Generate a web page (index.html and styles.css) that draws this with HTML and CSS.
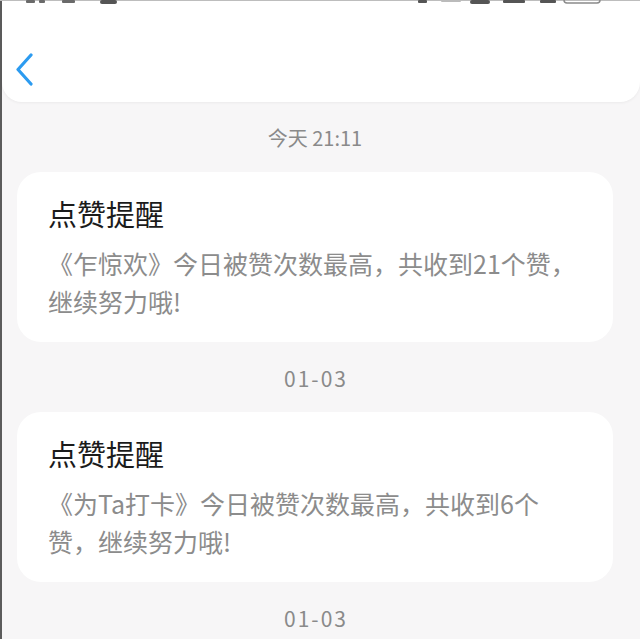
FILE: index.html
```html
<!DOCTYPE html>
<html lang="zh-CN">
<head>
<meta charset="utf-8">
<title>点赞提醒</title>
<link rel="stylesheet" href="styles.css">
</head>
<body>
<div class="screen">
  <header class="header">
    <svg class="statusbar" width="640" height="5" viewBox="0 0 640 5">
      <rect x="0" y="0" width="640" height="1" fill="#bdbdbd"/>
      <rect x="26" y="0" width="9" height="3" rx="1" fill="#6a6a6a"/>
      <rect x="39" y="0" width="6" height="3" rx="1" fill="#6a6a6a"/>
      <rect x="62" y="0" width="13" height="3" rx="1" fill="#6a6a6a"/>
      <rect x="100" y="0" width="17" height="4" rx="2" fill="#555"/>
      <rect x="418" y="0" width="9" height="3" rx="1" fill="#555"/>
      <rect x="441" y="0" width="20" height="2" rx="1" fill="#bbb"/>
      <rect x="470" y="0" width="20" height="4" rx="2" fill="#555"/>
      <rect x="503" y="0" width="22" height="3" rx="1" fill="#555"/>
      <rect x="540" y="0" width="16" height="3" rx="1" fill="#555"/>
      <rect x="564" y="-4" width="36" height="7" rx="3" fill="none" stroke="#8a8a8a" stroke-width="1.5"/>
    </svg>
    <div class="nav">
      <svg class="back" width="20" height="34" viewBox="0 0 20 34">
        <polyline points="15,3 2,17.5 15,32" fill="none" stroke="#2c9bf0" stroke-width="3.2" stroke-linecap="round" stroke-linejoin="round"/>
      </svg>
    </div>
  </header>

  <main class="list">
    <div class="date">今天 21:11</div>
    <section class="card">
      <h2 class="card-title">点赞提醒</h2>
      <p class="card-body">《乍惊欢》今日被赞次数最高，共收到21个赞，继续努力哦!</p>
    </section>

    <div class="date date-num">01-03</div>
    <section class="card">
      <h2 class="card-title">点赞提醒</h2>
      <p class="card-body">《为Ta打卡》今日被赞次数最高，共收到6个赞，继续努力哦!</p>
    </section>

    <div class="date date-num">01-03</div>
  </main>
</div>
</body>
</html>
```

FILE: styles.css
```css
html, body {
  margin: 0;
  padding: 0;
  background: #f7f6f7;
}

body {
  font-family: "Noto Sans CJK SC", "Noto Sans", sans-serif;
  width: 640px;
  height: 639px;
  overflow: hidden;
}

.screen {
  height: 639px;
  border-left: 2px solid #5c5c5c;
  box-sizing: border-box;
  background: #f7f6f7;
}

.header {
  background: #ffffff;
  height: 102px;
  border-radius: 0 0 20px 20px;
  box-shadow: 0 1px 3px rgba(0, 0, 0, 0.05);
  display: flex;
  flex-direction: column;
}

.statusbar {
  display: block;
  margin-left: -2px;
  flex: none;
}

.nav {
  flex: 1;
  display: flex;
  align-items: flex-start;
  padding-top: 47px;
  padding-left: 14px;
}

.back {
  display: block;
}

.list {
  padding: 0 27px 0 15px;
}

.date {
  text-align: center;
  font-size: 20px;
  line-height: 28px;
  color: #8a8a8a;
  padding: 22px 0 20px;
}

.date-num {
  font-size: 21px;
  letter-spacing: 2px;
  text-indent: 2px;
}

.card {
  background: #ffffff;
  border-radius: 24px;
  padding: 23px 31px 22px;
}

.card-title {
  margin: 0;
  font-size: 29px;
  line-height: 36px;
  font-weight: 400;
  color: #1b1b1b;
}

.card-body {
  margin: 13px 0 0;
  font-size: 25px;
  line-height: 38px;
  color: #8c8c8c;
}
```
